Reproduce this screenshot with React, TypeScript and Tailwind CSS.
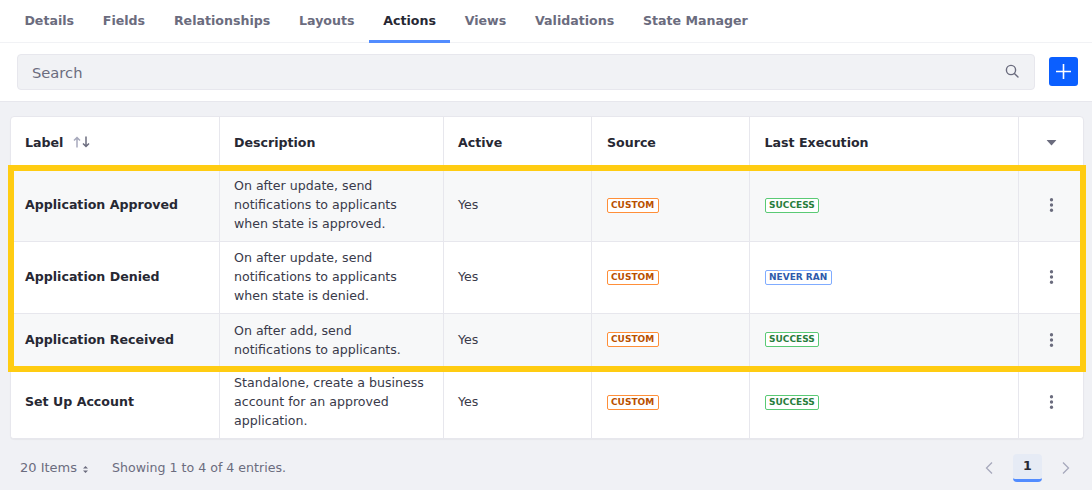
const tabs = ['Details', 'Fields', 'Relationships', 'Layouts', 'Actions', 'Views', 'Validations', 'State Manager'];

const rows = [
  { label: 'Application Approved', desc: ['On after update, send', 'notifications to applicants', 'when state is approved.'], status: 'SUCCESS', shaded: true },
  { label: 'Application Denied', desc: ['On after update, send', 'notifications to applicants', 'when state is denied.'], status: 'NEVER RAN', shaded: false },
  { label: 'Application Received', desc: ['On after add, send', 'notifications to applicants.'], status: 'SUCCESS', shaded: true },
  { label: 'Set Up Account', desc: ['Standalone, create a business', 'account for an approved', 'application.'], status: 'SUCCESS', shaded: false },
];

function Badge({ text }: { text: string }) {
  let colors = 'border-[#5aca75] text-[#287d3c]';
  if (text === 'CUSTOM') colors = 'border-[#ff8f39] text-[#b95000]';
  if (text === 'NEVER RAN') colors = 'border-[#80acff] text-[#2e5aac]';
  return (
    <span className={`inline-flex h-[15px] items-center rounded-[2px] border bg-white px-[3.5px] text-[9px] font-bold leading-none ${colors}`}>
      {text}
    </span>
  );
}

function Kebab() {
  return (
    <svg className="mx-auto translate-x-[0.5px]" width="4" height="16" viewBox="0 0 4 16" fill="#6b6c7e">
      <circle cx="2" cy="2.8" r="1.7" />
      <circle cx="2" cy="8" r="1.7" />
      <circle cx="2" cy="13.2" r="1.7" />
    </svg>
  );
}

export default function App() {
  return (
    <div className="relative h-[490px] w-[1092px] overflow-hidden bg-[#f0f1f5] font-['DejaVu_Sans',sans-serif] text-[12.6px] text-[#272833]">
      <div className="flex h-[43px] border-b border-[#f1f2f5] bg-white pl-[10px]">
        {tabs.map((tab) => (
          <div
            key={tab}
            className={`flex h-[43px] items-center border-b-[3px] px-[14.4px] pt-[2px] font-bold ${tab === 'Actions' ? 'border-[#528cff] text-[#272833]' : 'border-transparent text-[#6b6c7e]'}`}
          >
            {tab}
          </div>
        ))}
      </div>

      <div className="flex h-[59px] items-center border-b border-[#e7e7ed] bg-white pb-[1px] pl-[17px] pr-[14px]">
        <div className="flex h-[36px] flex-1 items-center justify-between rounded-[4px] border border-[#e7e7ed] bg-[#f1f2f5] pl-[14px] pr-[15px] text-[14.7px] text-[#6b6c7e]">
          <span className="mt-[3px]">Search</span>
          <svg className="-mt-[1px]" width="14" height="14" viewBox="0 0 14 14" fill="none" stroke="#6b6c7e" strokeWidth="1.4">
            <circle cx="6" cy="6" r="4.6" />
            <path d="M9.4 9.4 13 13" strokeLinecap="round" />
          </svg>
        </div>
        <button className="ml-[14px] flex h-[29px] w-[29px] items-center justify-center rounded-[3px] bg-[#0b5fff]">
          <svg width="15" height="15" viewBox="0 0 15 15" stroke="#fff" strokeWidth="1.6">
            <path d="M7.5 0v15M0 7.5h15" />
          </svg>
        </button>
      </div>

      <div className="mx-[10px] mt-[14px] w-[1074px] overflow-hidden rounded-[4px] border border-[#e7e7ed] bg-white shadow-[0_1px_1px_rgba(0,0,0,0.04)]">
        <table className="w-full table-fixed border-collapse text-left">
          <colgroup>
            <col className="w-[208px]" />
            <col className="w-[224px]" />
            <col className="w-[148px]" />
            <col className="w-[158px]" />
            <col className="w-[269px]" />
            <col />
          </colgroup>
          <thead>
            <tr className="h-[52px]">
              <th className="border-r border-[#e7e7ed] pl-[14px] pt-[1px] font-bold">
                <span className="inline-flex items-center">
                  Label
                  <svg className="ml-[10px] -mt-[3px]" width="17" height="12" viewBox="0 0 17 12" fill="none" strokeWidth="1.5">
                    <path d="M4 11.5V1.5M1 4.5l3-3 3 3" stroke="#a7a9bc" />
                    <path d="M13 .5v10M10 7.5l3 3 3-3" stroke="#6b6c7e" />
                  </svg>
                </span>
              </th>
              <th className="border-r border-[#e7e7ed] pl-[14.5px] pt-[1px] font-bold">Description</th>
              <th className="border-r border-[#e7e7ed] pl-[14.5px] pt-[1px] font-bold">Active</th>
              <th className="border-r border-[#e7e7ed] pl-[15.5px] pt-[1px] font-bold">Source</th>
              <th className="border-r border-[#e7e7ed] pl-[15px] pt-[1px] font-bold">Last Execution</th>
              <th className="pt-[1px]">
                <svg className="mx-auto translate-x-[0.5px]" width="10" height="6" viewBox="0 0 10 6" fill="#6b6c7e">
                  <path d="M0 0h10L5 5.5z" />
                </svg>
              </th>
            </tr>
          </thead>
          <tbody>
            {rows.map((row) => {
              const short = row.desc.length === 2;
              return (
                <tr key={row.label} className={`border-t border-[#e7e7ed] ${row.shaded ? 'bg-[#f7f8f9]' : 'bg-white'}`}>
                  <td className={`border-r border-[#e7e7ed] pl-[14px] font-bold ${short ? 'pt-[2px]' : ''}`}>{row.label}</td>
                  <td className={`border-r border-[#e7e7ed] pl-[14.5px] leading-[19px] text-[#393a4a] ${short ? 'py-[7px]' : 'pb-[8px] pt-[6px]'}`}>
                    {row.desc.map((line) => (
                      <div key={line}>{line}</div>
                    ))}
                  </td>
                  <td className={`border-r border-[#e7e7ed] pl-[14.5px] text-[#393a4a] ${short ? 'pt-[2px]' : ''}`}>Yes</td>
                  <td className="border-r border-[#e7e7ed] pb-[2px] pl-[15px]"><Badge text="CUSTOM" /></td>
                  <td className="border-r border-[#e7e7ed] pb-[2px] pl-[15px]"><Badge text={row.status} /></td>
                  <td><Kebab /></td>
                </tr>
              );
            })}
          </tbody>
        </table>
      </div>

      <div className="mt-[1px] flex h-[56px] items-center pl-[20px] pr-[21px] text-[#6b6c7e]">
        <span className="text-[13px]">20 Items</span>
        <svg className="ml-[5px] mt-[3px]" width="7" height="9" viewBox="0 0 7 9" fill="#6b6c7e">
          <path d="M3.5 1 6 3.5H1zM3.5 8 1 5.5h5z" />
        </svg>
        <span className="ml-[23px] mt-[1px]">Showing 1 to 4 of 4 entries.</span>
        <div className="ml-auto flex items-center">
          <svg width="10" height="14" viewBox="0 0 10 14" fill="none" stroke="#a7a9bc" strokeWidth="1.3">
            <path d="M8 1.5 2.5 7 8 12.5" />
          </svg>
          <div className="mx-[19px] flex h-[28px] w-[29px] items-center justify-center rounded-[4px] border-b-[3px] border-[#528cff] bg-[#e6ebf5] font-bold text-[#272833]">
            1
          </div>
          <svg width="10" height="14" viewBox="0 0 10 14" fill="none" stroke="#a7a9bc" strokeWidth="1.3">
            <path d="M2 1.5 7.5 7 2 12.5" />
          </svg>
        </div>
      </div>

      <div className="pointer-events-none absolute left-[8px] top-[165px] h-[207px] w-[1078px] border-[6px] border-[#ffcc12]" />
    </div>
  );
}
